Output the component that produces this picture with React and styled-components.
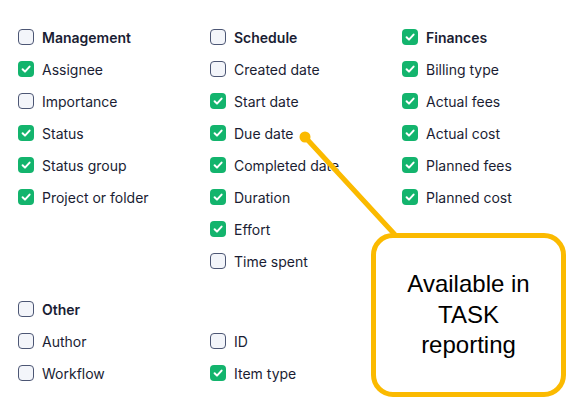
import React from 'react'
import styled, { createGlobalStyle } from 'styled-components'

const Global = createGlobalStyle`
  html, body { margin: 0; padding: 0; background: #fff; }
  body { font-family: Inter, "Noto Sans", sans-serif; }
`

const sections = [
  [
    { title: 'Management', on: false, items: [['Assignee', true], ['Importance', false], ['Status', true], ['Status group', true], ['Project or folder', true]] },
    { title: 'Schedule', on: false, items: [['Created date', false], ['Start date', true], ['Due date', true], ['Completed date', true], ['Duration', true], ['Effort', true], ['Time spent', false]] },
    { title: 'Finances', on: true, items: [['Billing type', true], ['Actual fees', true], ['Actual cost', true], ['Planned fees', true], ['Planned cost', true]] },
  ],
  [
    { title: 'Other', on: false, items: [['Author', false], ['Workflow', false]] },
    { title: null, items: [['ID', false], ['Item type', true]] },
  ],
]

function App() {
  return (
    <Page>
      <Global />
      {sections.map((cols, i) => (
        <Section key={i}>
          {cols.map((col, j) => (
            <Column key={j}>
              {col.title ? <Option label={col.title} on={col.on} bold /> : <Spacer />}
              {col.items.map(([label, on]) => (
                <Option key={label} label={label} on={on} />
              ))}
            </Column>
          ))}
        </Section>
      ))}

      <Callout width="574" height="404">
        <line x1="305" y1="137" x2="398" y2="238" stroke="#fbba00" strokeWidth="5" strokeLinecap="round" />
        <circle cx="305" cy="137" r="5.5" fill="#fbba00" />
      </Callout>
      <Bubble>
        Available in<br />TASK<br />reporting
      </Bubble>
    </Page>
  )
}

function Option({ label, on, bold }) {
  return (
    <Row>
      <Box $on={on}>
        {on && (
          <svg width="12" height="12" viewBox="0 0 12 12">
            <path d="M2.6 6.2 L5 8.6 L9.6 3.6" fill="none" stroke="#fff" strokeWidth="2" strokeLinecap="round" strokeLinejoin="round" />
          </svg>
        )}
      </Box>
      <Label $bold={bold}>{label}</Label>
    </Row>
  )
}

export default App

const Page = styled.div`
  position: relative;
  width: 574px;
  height: 404px;
  padding: 21px 0 0 18px;
  box-sizing: border-box;
  overflow: hidden;
`

const Section = styled.div`
  display: grid;
  grid-template-columns: 192px 192px 192px;
  margin-bottom: 16px;
`

const Column = styled.div`
  display: flex;
  flex-direction: column;
`

const Row = styled.div`
  display: flex;
  align-items: center;
  gap: 8px;
  height: 32px;
`

const Spacer = styled.div`
  height: 32px;
`

const Box = styled.span`
  width: 16px;
  height: 16px;
  box-sizing: border-box;
  border-radius: 4px;
  display: flex;
  align-items: center;
  justify-content: center;
  background: ${p => (p.$on ? '#13b46d' : '#f3f5fa')};
  border: ${p => (p.$on ? 'none' : '1px solid #4c5674')};
`

const Label = styled.span`
  font-size: 14px;
  color: #1a1d33;
  font-weight: ${p => (p.$bold ? 600 : 400)};
`

const Callout = styled.svg`
  position: absolute;
  left: 0;
  top: 0;
  pointer-events: none;
`

const Bubble = styled.div`
  position: absolute;
  left: 371px;
  top: 233px;
  width: 195px;
  height: 164px;
  box-sizing: border-box;
  border: 5px solid #fbba00;
  border-radius: 22px;
  background: #fff;
  display: flex;
  align-items: center;
  justify-content: center;
  text-align: center;
  font-family: "Liberation Sans", Arial, sans-serif;
  font-size: 24px;
  line-height: 30.5px;
  color: #000;
`
